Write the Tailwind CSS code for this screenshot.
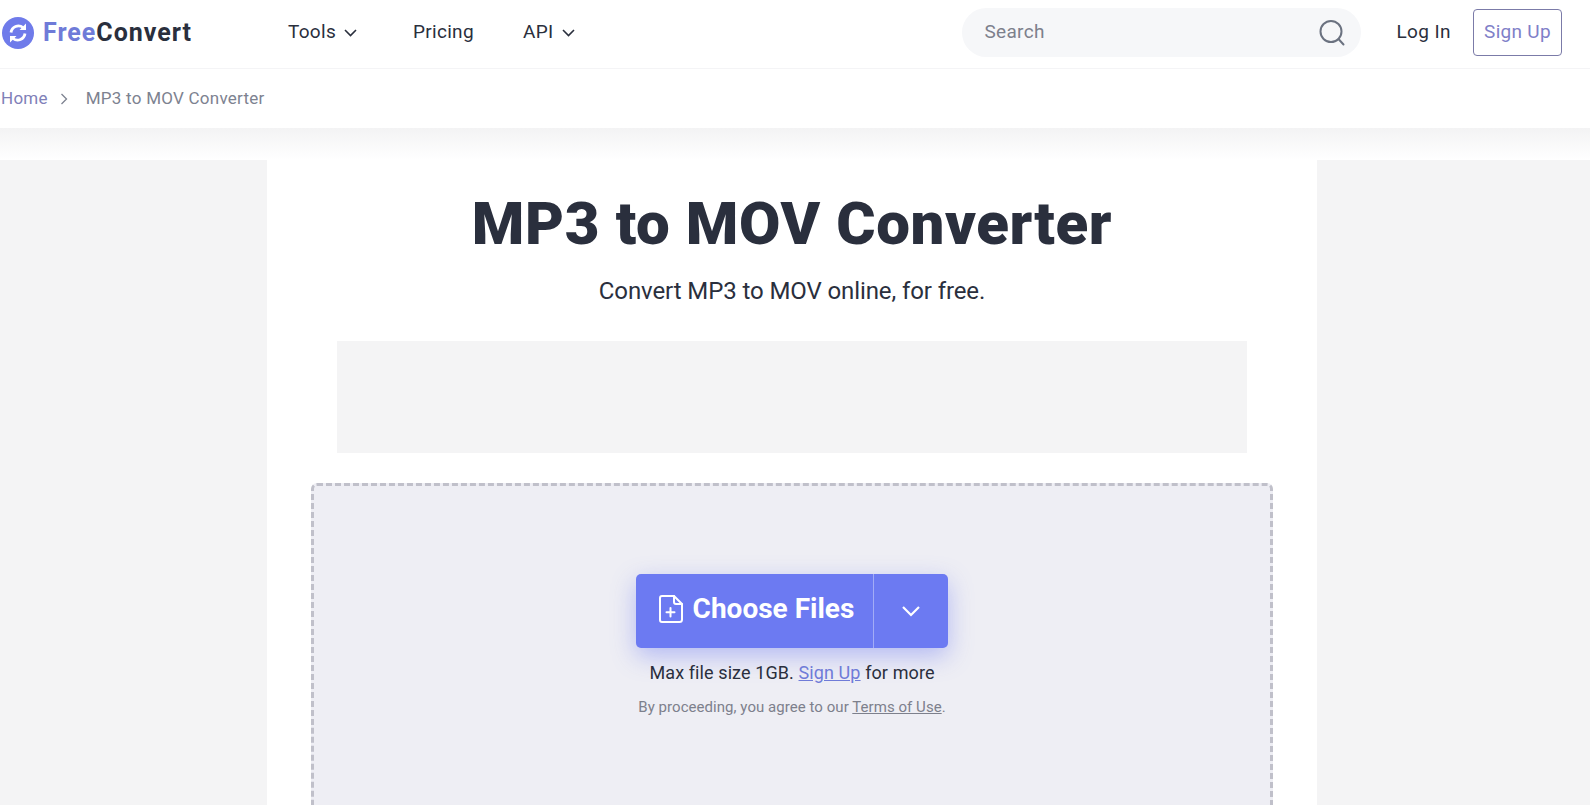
<!DOCTYPE html>
<html lang="en">
<head>
    <meta charset="UTF-8">
    <meta name="viewport" content="width=device-width, initial-scale=1.0">
    <title>MP3 to MOV Converter</title>
    <script src="https://cdn.jsdelivr.net/npm/@tailwindcss/browser@4"></script>
</head>
<body class="h-screen overflow-hidden bg-white font-['Roboto',sans-serif] text-[#2a2f3d]">
    <!-- top nav -->
    <header class="flex h-[69px] items-center border-b border-[#f4f4f6] pb-[3px] pl-[2px] pr-[28px]">
        <a class="flex w-[286px] items-center gap-[9px]">
            <svg class="h-[32px] w-[32px]" viewBox="0 0 32 32">
                <circle cx="16" cy="16" r="16" fill="#6f7bea"/>
                <path d="M9 15.500a7.500 7.500 0 0 1 12-5M23 16.500a7.500 7.500 0 0 1-12 5" fill="none" stroke="#fff" stroke-width="2.800"/>
                <path d="M24 6.500v6.500h-6.500zM8 25.500v-6.500h6.500z" fill="#fff"/>
            </svg>
            <span class="text-[25px] leading-none font-bold tracking-[1px]"><span class="text-[#6f7bd8]">Free</span><span class="text-[#2a2f3d]">Convert</span></span>
        </a>
        <nav class="flex items-center text-[19px] tracking-[0.3px]">
            <a class="flex w-[125px] items-center gap-[8px]">Tools
                <svg class="h-[8px] w-[13px]" viewBox="0 0 13 8"><path d="M1 1l5.500 5.500L12 1" fill="none" stroke="#2a2f3d" stroke-width="1.600"/></svg>
            </a>
            <a class="w-[110px]">Pricing</a>
            <a class="flex items-center gap-[9px]">API
                <svg class="h-[8px] w-[13px]" viewBox="0 0 13 8"><path d="M1 1l5.500 5.500L12 1" fill="none" stroke="#2a2f3d" stroke-width="1.600"/></svg>
            </a>
        </nav>
        <div class="ml-auto flex h-[49px] w-[399px] items-center justify-between rounded-full bg-[#f6f7f9] pr-[15px] pl-[22px]">
            <span class="text-[19px] tracking-[0.3px] text-[#7d808c]">Search</span>
            <svg class="h-[28px] w-[28px]" viewBox="0 0 28 28" fill="none" stroke="#6b7280" stroke-width="2">
                <circle cx="13" cy="12.500" r="10.500"/>
                <path d="M20.500 20l5 5.500" stroke-linecap="round"/>
            </svg>
        </div>
        <a class="ml-[35px] text-[19px] tracking-[0.4px]">Log In</a>
        <a class="ml-[22px] flex h-[47px] w-[89px] items-center justify-center rounded-[4px] border border-[#7b7ba8] text-[19px] tracking-[0.3px] text-[#7f80c8]">Sign Up</a>
    </header>

    <!-- breadcrumb -->
    <div class="flex h-[59px] items-center pl-[1px] text-[17px] tracking-[0.25px] text-[#7d8290]">
        <a class="text-[#7f80b8]">Home</a>
        <svg class="mr-[18px] ml-[12px] h-[12px] w-[8px]" viewBox="0 0 8 12"><path d="M1.500 1l5 5-5 5" fill="none" stroke="#7d8290" stroke-width="1.300"/></svg>
        <span>MP3 to MOV Converter</span>
    </div>

    <div class="h-[32px] bg-gradient-to-b from-[#f3f3f4] to-white"></div>

    <div class="grid grid-cols-[267px_1050px_273px]">
        <div class="bg-[#f4f4f5]"></div>
        <main class="flex h-[645px] flex-col items-center overflow-hidden">
            <h1 class="mt-[26px] text-[60px] leading-[76px] font-black tracking-[0.6px] text-[#2a2f3d]">MP3 to MOV Converter</h1>
            <p class="mt-[14px] text-[24px] leading-[30px] tracking-[-0.1px]">Convert MP3 to MOV online, for free.</p>
            <div class="mt-[35px] h-[112px] w-[910px] shrink-0 bg-[#f4f4f5]"></div>
            <div class="mt-[30px] flex h-[500px] w-[962px] shrink-0 flex-col items-center rounded-[6px] border-[3px] border-dashed border-[#c0c0ca] bg-[#eeeef4] pt-[88px]">
                <div class="flex h-[74px] w-[312px] shrink-0 rounded-[5px] bg-[#6c7af2] text-white shadow-[0_8px_24px_rgba(108,122,242,0.45)]">
                    <button class="flex w-[238px] items-center justify-center gap-[10px] border-r border-[#a3acf6] pl-[4px]">
                        <svg class="mb-[4px] h-[28px] w-[24px]" viewBox="0 0 24 28" fill="none" stroke="#fff" stroke-width="2" stroke-linejoin="round" stroke-linecap="round">
                            <path d="M3 1h12l8 8v15.500a2.500 2.500 0 0 1-2.500 2.500h-17.500a2 2 0 0 1-2-2v-22a2 2 0 0 1 2-2z"/>
                            <path d="M15 1v6a2 2 0 0 0 2 2h6M11.500 13v8.500M7.500 17.250h8"/>
                        </svg>
                        <span class="pb-[4px] text-[28px] font-bold">Choose Files</span>
                    </button>
                    <button class="flex flex-1 items-center justify-center">
                        <svg class="h-[12px] w-[20px]" viewBox="0 0 20 12"><path d="M2 2l8 8 8-8" fill="none" stroke="#fff" stroke-width="2.200"/></svg>
                    </button>
                </div>
                <p class="mt-[12px] text-[18px] leading-[26px] tracking-[0.1px]">Max file size 1GB. <a class="text-[#6f7bd8] underline">Sign Up</a> for more</p>
                <p class="mt-[11px] text-[15px] leading-[20px] tracking-[0.05px] text-[#7d808c]">By proceeding, you agree to our <a class="underline">Terms of Use</a>.</p>
            </div>
        </main>
        <div class="bg-[#f4f4f5]"></div>
    </div>
</body>
</html>
